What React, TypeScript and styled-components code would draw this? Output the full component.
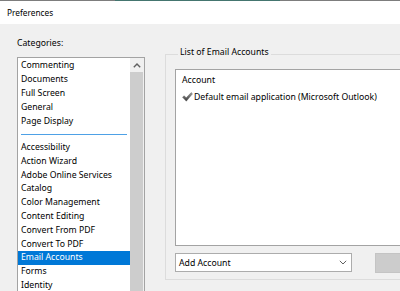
import * as React from 'react';
import styled, { createGlobalStyle } from 'styled-components';

const GlobalStyle = createGlobalStyle`
    *, *::before, *::after {
        box-sizing: border-box;
    }
    html, body {
        margin: 0;
        padding: 0;
        background: #f0f0f0;
    }
    body {
        width: 400px;
        height: 291px;
        overflow: hidden;
        font-family: "Noto Sans", "Open Sans", sans-serif;
        font-size: 8.7px;
        color: #000;
    }
`;

const topCategories = ['Commenting', 'Documents', 'Full Screen', 'General', 'Page Display'];
const otherCategories = [
    'Accessibility', 'Action Wizard', 'Adobe Online Services', 'Catalog', 'Color Management',
    'Content Editing', 'Convert From PDF', 'Convert To PDF', 'Email Accounts', 'Forms',
    'Identity', 'Internet', 'JavaScript'
];

const Window = styled.div`
    width: 400px;
    height: 291px;
    overflow: hidden;
    display: flex;
    flex-direction: column;
`;

const TitleBar = styled.div`
    height: 24px;
    flex-shrink: 0;
    background: #fff;
    border-top: 1px solid transparent;
    border-image: linear-gradient(to right, #7d7d7d 0 115px, #44756f 115px 280px, #7d7d7d 280px) 1;
    display: flex;
    align-items: center;
    padding-left: 7px;
    font-size: 8.3px;
`;

const Body = styled.div`
    flex: 1;
    display: flex;
    min-height: 0;
`;

const LeftColumn = styled.div`
    width: 128px;
    margin-left: 17px;
    padding-top: 12px;
    display: flex;
    flex-direction: column;
    flex-shrink: 0;
`;

const Label = styled.div`
    line-height: 14px;
    height: 14px;
    margin-bottom: 7px;
`;

const ListBox = styled.div`
    flex: 1;
    background: #fff;
    border: 1px solid #a3a3a3;
    border-bottom: none;
    display: flex;
`;

const Items = styled.div`
    width: 112px;
    display: flex;
    flex-direction: column;
`;

const Item = styled.div<{ selected?: boolean; tall?: boolean }>`
    flex-shrink: 0;
    height: ${p => (p.tall ? '14px' : '13.8px')};
    line-height: ${p => (p.tall ? '14px' : '13.8px')};
    padding-left: 3px;
    white-space: nowrap;
    background: ${p => (p.selected ? '#0078d7' : 'transparent')};
    color: ${p => (p.selected ? '#fff' : '#000')};
`;

const Separator = styled.div`
    flex-shrink: 0;
    height: 13px;
    display: flex;
    align-items: center;
    padding: 0 3px;

    &::after {
        content: '';
        flex: 1;
        height: 1px;
        background: #4ea1e6;
    }
`;

const ScrollBar = styled.div`
    width: 14px;
    display: flex;
    flex-direction: column;
    background: #f0f0f0;
`;

const ScrollArrow = styled.div`
    height: 14px;
    width: 13px;
    display: flex;
    align-items: center;
    justify-content: center;
`;

const ScrollThumb = styled.div`
    flex: 1;
    width: 13px;
    background: #cdcdcd;
`;

const RightColumn = styled.div`
    margin-left: 20px;
    padding-top: 30px;
    display: flex;
    flex-direction: column;
    flex-shrink: 0;
`;

const GroupBox = styled.div`
    width: 260px;
    border: 1px solid #dcdcdc;
    padding: 0 0 6px 9px;
    display: flex;
    flex-direction: column;
`;

const Legend = styled.div`
    align-self: flex-start;
    margin: -10px 0 0 3px;
    padding: 0 2px;
    line-height: 14px;
    background: #f0f0f0;
`;

const AccountList = styled.div`
    margin-top: 10px;
    height: 177px;
    background: #fff;
    border: 1px solid #a3a3a3;
    padding: 1px 0 0 6px;
`;

const AccountRow = styled.div`
    display: flex;
    align-items: center;
    height: 17px;
    gap: 1px;
    white-space: nowrap;
`;

const ControlsRow = styled.div`
    margin-top: 7px;
    display: flex;
    align-items: flex-start;
    gap: 23px;
`;

const Combo = styled.div`
    flex-shrink: 0;
    width: 177px;
    height: 19px;
    border: 1px solid #acacac;
    background: #fff;
    display: flex;
    align-items: center;
    justify-content: space-between;
    padding: 0 4px 0 3px;
`;

const Button = styled.div`
    flex-shrink: 0;
    width: 80px;
    height: 20px;
    background: #cccccc;
    border: 1px solid #c4c4c4;
`;

const BottomLabel = styled.div`
    margin: 9px 0 0 6px;
    line-height: 14px;
    white-space: nowrap;
`;

const CheckIcon = () => (
    <svg width="11" height="10" viewBox="0 0 11 10">
        <defs>
            <linearGradient id="chk" x1="0" y1="0" x2="0" y2="1">
                <stop offset="0" stopColor="#9a9a9a" />
                <stop offset="1" stopColor="#3a3a3a" />
            </linearGradient>
        </defs>
        <path d="M0.5 5.2 L2.2 3.8 L4.2 5.8 L9.2 0.6 L10.5 1.8 L4.3 9.2 Z" fill="url(#chk)" stroke="#555" strokeWidth="0.4" />
    </svg>
);

const Chevron = ({ up }: { up?: boolean }) => (
    <svg width="8" height="5" viewBox="0 0 8 5">
        <path d={up ? 'M0.8 4.2 L4 1 L7.2 4.2' : 'M0.8 0.8 L4 4 L7.2 0.8'} fill="none" stroke="#606060" strokeWidth={up ? 1.4 : 1} />
    </svg>
);

export default function App() {
    return (
        <>
            <GlobalStyle />
            <Window>
                <TitleBar>Preferences</TitleBar>
                <Body>
                    <LeftColumn>
                        <Label>Categories:</Label>
                        <ListBox>
                            <Items>
                                {topCategories.map(c => <Item key={c} tall>{c}</Item>)}
                                <Separator />
                                {otherCategories.map(c => (
                                    <Item key={c} selected={c === 'Email Accounts'}>{c}</Item>
                                ))}
                            </Items>
                            <ScrollBar>
                                <ScrollArrow><Chevron up /></ScrollArrow>
                                <ScrollThumb />
                            </ScrollBar>
                        </ListBox>
                    </LeftColumn>
                    <RightColumn>
                        <GroupBox>
                            <Legend>List of Email Accounts</Legend>
                            <AccountList>
                                <AccountRow>Account</AccountRow>
                                <AccountRow><CheckIcon />Default email application (Microsoft Outlook)</AccountRow>
                            </AccountList>
                            <ControlsRow>
                                <Combo>Add Account<Chevron /></Combo>
                                <Button />
                            </ControlsRow>
                        </GroupBox>
                        <BottomLabel>Send file in email using</BottomLabel>
                    </RightColumn>
                </Body>
            </Window>
        </>
    );
}
